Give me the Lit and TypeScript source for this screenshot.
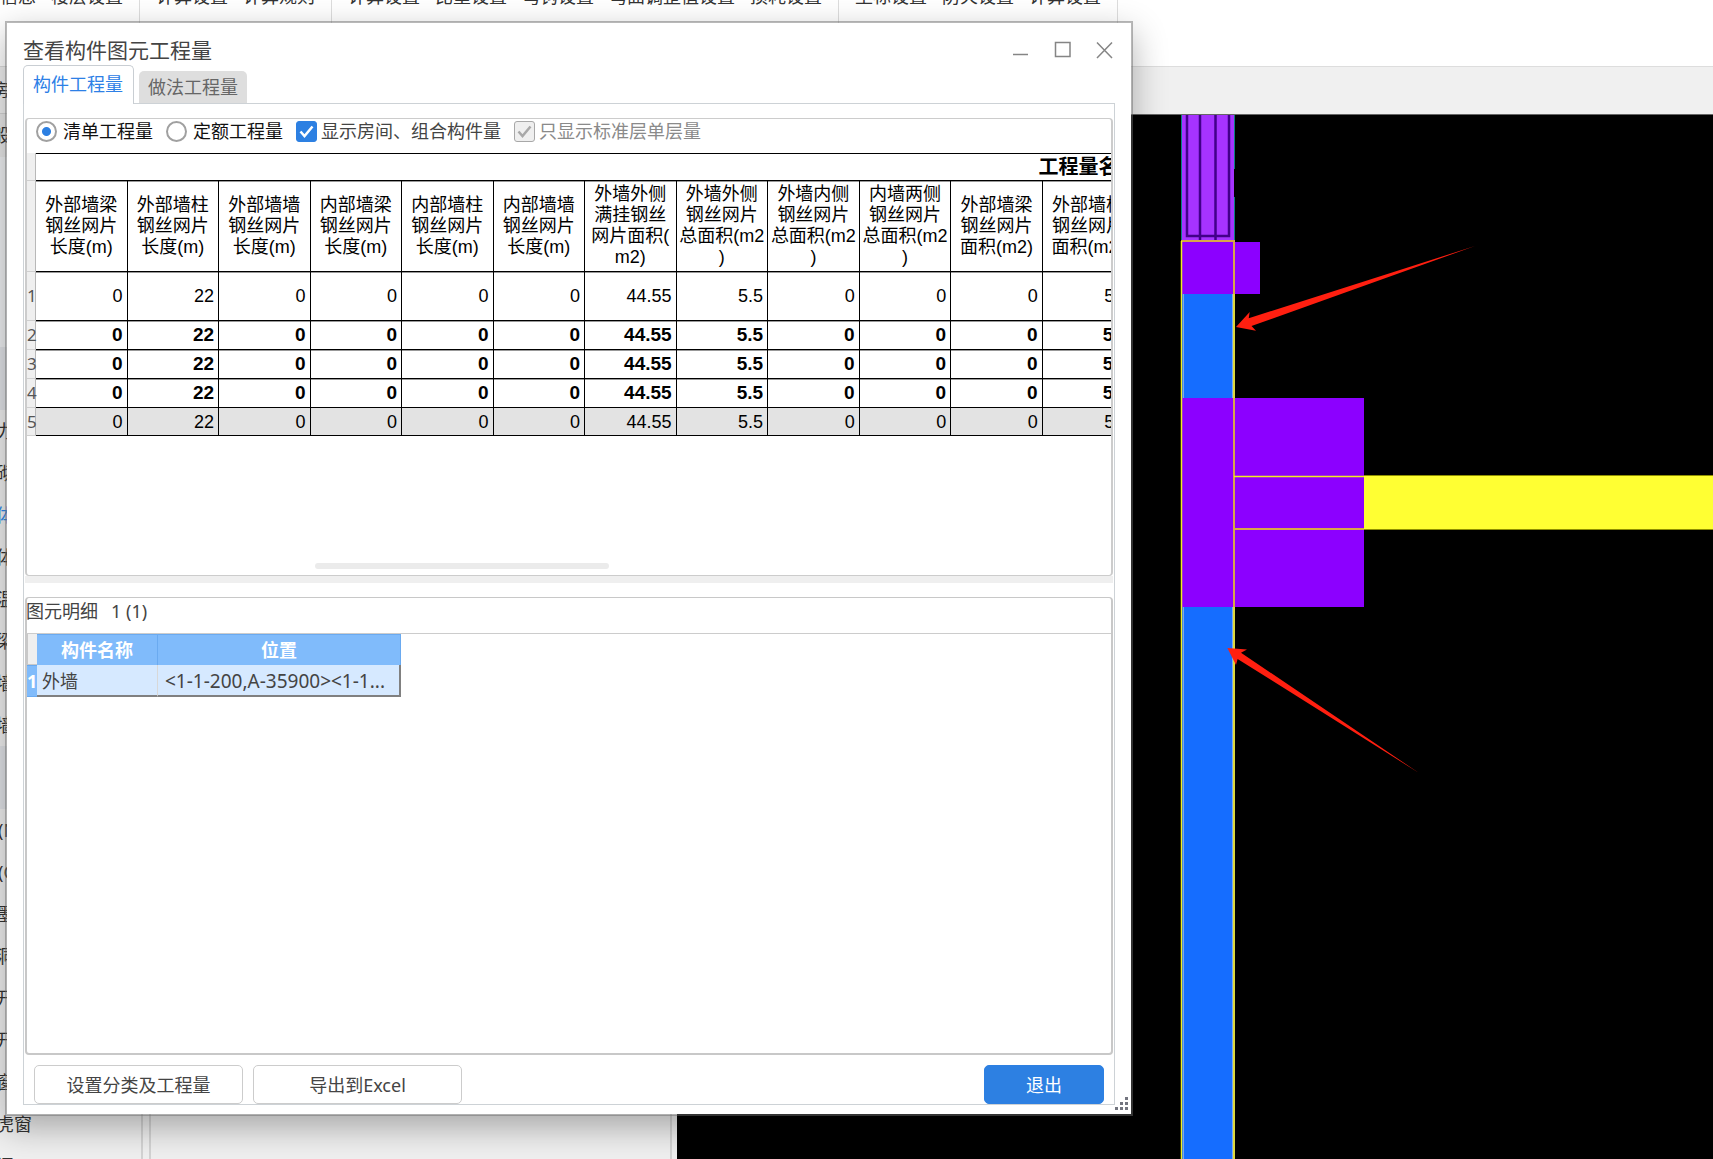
import { LitElement, html, css, svg } from "lit";
import { customElement, property, state } from "lit/decorators.js";
import { classMap } from "lit/directives/class-map.js";

const RIBBON: string[][] = [
  ["信息", "楼层设置"],
  ["计算设置", "计算规则"],
  ["计算设置", "比重设置", "弯钩设置", "弯曲调整值设置", "损耗设置"],
  ["坐标设置", "防火设置", "计算设置"],
];

const NAV_UPPER = ["力", "砌", "体", "体", "温", "梁", "墙", "墙"];
const NAV_LOWER = ["(N", "(Q", "墨", "洞", "开", "开", "窗", "虎窗", "门"];

const COLUMNS: string[][] = [
  ["外部墙梁", "钢丝网片", "长度(m)"],
  ["外部墙柱", "钢丝网片", "长度(m)"],
  ["外部墙墙", "钢丝网片", "长度(m)"],
  ["内部墙梁", "钢丝网片", "长度(m)"],
  ["内部墙柱", "钢丝网片", "长度(m)"],
  ["内部墙墙", "钢丝网片", "长度(m)"],
  ["外墙外侧", "满挂钢丝", "网片面积(", "m2)"],
  ["外墙外侧", "钢丝网片", "总面积(m2", ")"],
  ["外墙内侧", "钢丝网片", "总面积(m2", ")"],
  ["内墙两侧", "钢丝网片", "总面积(m2", ")"],
  ["外部墙梁", "钢丝网片", "面积(m2)"],
  ["外部墙柱", "钢丝网片", "面积(m2)"],
];
const TOTAL_COLUMNS = 23;
const VALUES = ["0", "22", "0", "0", "0", "0", "44.55", "5.5", "0", "0", "0", "5.5"];
const ROWS = ["plain first", "bold", "bold", "bold", "plain total"];

/* Plan view of the model, drawn in page coordinates. */
@customElement("model-canvas")
export class ModelCanvas extends LitElement {
  static styles = css`
    :host { display: block; background: #000; overflow: hidden; }
    .plan { display: block; width: 100%; height: 100%; }
  `;
  render() {
    return html`<svg class="plan" role="img" aria-label="模型">
      ${svg`<g transform="translate(-677 -115)">
        <rect x="1182" y="115" width="52" height="126" fill="#a633ff"/>
        <path d="M1181.500 115V241M1234.500 115V169M1234.500 197V241" stroke="#0a7f82" fill="none"/>
        <path d="M1187 115V236H1229V115M1200 115V242H1215.500V115" stroke="#42008a" stroke-width="2.500" fill="none"/>
        <rect x="1182" y="242" width="78" height="52" fill="#8c00ff"/>
        <rect x="1182" y="294" width="52" height="104" fill="#156dff"/>
        <rect x="1182" y="606" width="52" height="2000" fill="#156dff"/>
        <path d="M1183.500 294V398M1232.500 294V398M1183.500 607V2600M1232.500 607V2600" stroke="#7fa8e8" fill="none"/>
        <rect x="1182" y="398" width="182" height="209" fill="#8c00ff"/>
        <rect x="1364" y="476" width="4000" height="54" fill="#ffff33"/>
        <path d="M1364 475.500H5000M1364 529.500H5000" stroke="#8f8f00" fill="none"/>
        <path d="M1181 241H1235M1234 241V294M1234 398V607M1234 529H1364" stroke="#d8a648" stroke-width="2" fill="none"/>
        <path d="M1181.500 241V2600M1234 476.500H1364" stroke="#f2ee20" stroke-width="1.500" fill="none"/>
        <path d="M1234 294V398M1234 607V2600" stroke="#dcd83c" stroke-width="2" fill="none"/>
        <path d="M1236 327L1249.700 312L1248.700 318.300L1475 246L1251.500 326L1256 330.700Z" fill="#ff1f10"/>
        <path d="M1227.400 648L1247 649.500L1241 652.700L1419 773L1237.600 659L1236 665Z" fill="#ff1f10"/>
      </g>`}
    </svg>`;
  }
}

@customElement("quantity-table")
export class QuantityTable extends LitElement {
  static styles = css`
    :host { display: block; overflow: hidden; }
    .sheet {
      width: 2114px; table-layout: fixed; border-collapse: separate; border-spacing: 0;
      font-family: "Liberation Sans", "Noto Sans CJK SC", sans-serif; color: #000;
    }
    .gutter-col { width: 9px; }
    th, td { box-sizing: border-box; padding: 0; font-weight: 400; }
    .gutter {
      background: #efefef; border-right: 1px solid #b8b8b8; border-bottom: 1px solid #cfcfcf;
      color: #555; font-family: "Noto Sans", sans-serif; font-size: 17px; line-height: 20px;
    }
    .title, .head, .num { border-bottom: 1px solid #000; box-shadow: 0 1px 0 #999; }
    .title { height: 28px; border-top: 1px solid #000; font-size: 20px; line-height: 24px; font-weight: 700; }
    .head { height: 91px; border-right: 1px solid #000; font-size: 18px; line-height: 21px; }
    .line { display: block; white-space: nowrap; }
    .num { height: 29px; border-right: 1px solid #000; padding-right: 4px; text-align: right; font-size: 18px; line-height: 20px; }
    .first .num { height: 49px; }
    .bold .num { font-size: 19px; font-weight: 700; }
    .total .num { height: 28px; background: #e3e3e3; }
  `;
  render() {
    const rest = TOTAL_COLUMNS - COLUMNS.length;
    return html`<table class="sheet">
      <colgroup><col class="gutter-col" /><col span=${TOTAL_COLUMNS} /></colgroup>
      <thead>
        <tr><td class="gutter"></td><th class="title" colspan=${TOTAL_COLUMNS}>工程量名称</th></tr>
        <tr>
          <td class="gutter"></td>
          ${COLUMNS.map((c) => html`<th class="head" scope="col">${c.map((l) => html`<span class="line">${l}</span>`)}</th>`)}
          <td class="head" colspan=${rest}></td>
        </tr>
      </thead>
      <tbody>
        ${ROWS.map((kind, i) => html`<tr class=${kind}>
          <th class="gutter" scope="row">${i + 1}</th>
          ${VALUES.map((v) => html`<td class="num">${v}</td>`)}
          <td class="num" colspan=${rest}></td>
        </tr>`)}
      </tbody>
    </table>`;
  }
}

@customElement("quantity-dialog")
export class QuantityDialog extends LitElement {
  @property() heading = "";
  @state() private tab = 0;

  static styles = css`
    :host {
      display: flex; flex-direction: column; box-sizing: border-box; background: #fff; background-clip: padding-box;
      border: 2px solid rgba(106, 106, 106, 0.48); box-shadow: 0 12px 32px rgba(0, 0, 0, 0.3);
      font: 18px/24px "Noto Sans", "Noto Sans CJK SC", sans-serif; color: #444;
    }
    button { font: inherit; color: inherit; margin: 0; padding: 0; cursor: pointer; }
    .titlebar { display: flex; justify-content: space-between; height: 42px; padding: 15px 16px 0; box-sizing: border-box; }
    .heading { margin: 0; font-size: 21px; line-height: 24px; font-weight: 400; }
    .controls { display: flex; gap: 22px; }
    .control { width: 20px; height: 24px; border: 0; background: none; }
    .glyph { display: block; width: 20px; height: 24px; fill: none; stroke: #858585; stroke-width: 1.5; }
    .tabs { display: flex; align-items: flex-end; gap: 5px; height: 38px; padding: 0 16px; }
    .tab { height: 32px; padding: 0 9px; border: 0; border-radius: 5px 5px 0 0; background: #dedede; color: #666; }
    .tab.active {
      position: relative; height: 39px; margin-bottom: -1px; padding: 0 10px 3px 9px; border: 1px solid #c9ced3; border-bottom: 0;
      background: #fff; color: #2d80e6;
    }
    .pane {
      flex: 1; min-height: 0; display: flex; flex-direction: column; margin: 0 16px 9px; padding: 14px 1px 0;
      border: 1px solid #cdd2d6;
    }
    .group { display: flex; flex-direction: column; box-sizing: border-box; border: 1px solid #ccc; border-width: 1px 2px; border-radius: 4px; }
    .summary { height: 458px; }
    .options { display: flex; align-items: center; height: 24px; padding: 0 0 10px 9px; }
    .option { display: flex; align-items: center; gap: 6px; margin-right: 13px; color: #111; white-space: nowrap; }
    .option.check { gap: 4px; color: #444; }
    .option.off { color: #8a8a8a; }
    .dot, .tick { appearance: none; box-sizing: border-box; width: 21px; height: 21px; margin: 0; border: 2px solid #a0a0a0; background: #fff; }
    .dot { border-radius: 50%; }
    .dot:checked { background: radial-gradient(circle, #2d80e2 4px, #fff 5px); }
    .mark { display: grid; width: 21px; height: 21px; }
    .mark > * { grid-area: 1 / 1; }
    .tick { border-width: 1px; border-radius: 3px; }
    .tick:checked { background: #2d80e2; border-color: #2d80e2; }
    .tick:disabled { background: #efefef; border-color: #a8a8a8; }
    .tickmark { width: 21px; height: 21px; fill: none; stroke: #fff; stroke-width: 2.5; pointer-events: none; }
    .off .tickmark { stroke: #a8a8a8; }
    .scrollbar { margin-top: auto; padding: 0 0 6px 288px; }
    .thumb { width: 294px; height: 6px; border-radius: 3px; background: #ebebeb; }
    .splitter { height: 7px; margin-bottom: 14px; background: #efefef; }
    .details { flex: 1; min-height: 0; border-bottom-width: 2px; border-color: #c8c8c8; }
    .caption { display: flex; gap: 13px; padding: 1px 0 10px; margin-left: -1px; border-bottom: 1px solid #ccc; }
    .items { width: 374px; table-layout: fixed; border-collapse: separate; border-spacing: 0; }
    .items th, .items td { box-sizing: border-box; height: 31px; padding: 0; line-height: 24px; }
    .items td.cell { height: 32px; }
    .c0 { width: 10px; }
    .c1 { width: 121px; }
    .items .corner { background: #efefef; border: 1px solid #c8c8c8; border-width: 0 0 1px 1px; }
    .items .col { background: #80bbfb; border-right: 1px solid #6aaaf0; border-top: 1px solid #6aaaf0; color: #fff; font-weight: 700; }
    .items .row { background: #80bbfb; color: #fff; font-weight: 700; border: 1px solid #6aaaf0; border-width: 1px 0; }
    .items .cell { background: #d6e9ff; border-bottom: 2px solid #808080; padding: 1px 0 0 5px; }
    .items .name { border-right: 1px solid #d8d8d8; }
    .items .place { padding-left: 7px; border-right: 2px solid #808080; white-space: nowrap; overflow: hidden; font-size: 19px; }
    .footer { display: flex; gap: 10px; padding: 10px 9px 0 9px; }
    .action { width: 209px; height: 39px; border: 1px solid #ccc; border-radius: 5px; background: #fff; }
    .primary { width: 120px; margin-left: auto; border-color: #2d80e2; background: #2d80e2; color: #fff; }
    .grip { position: absolute; right: 2px; bottom: 3px; width: 14px; height: 14px; fill: #73757f; }
  `;

  private tick() {
    return html`<svg class="tickmark" viewBox="0 0 21 21" aria-hidden="true"><path d="M4.500 10.500L8.500 15L16.500 5.500" /></svg>`;
  }

  render() {
    return html`
      <header class="titlebar">
        <h1 class="heading">${this.heading}</h1>
        <div class="controls">
          <button class="control" aria-label="最小化"><svg class="glyph" viewBox="0 0 20 24"><path d="M2 16.500H17" /></svg></button>
          <button class="control" aria-label="最大化"><svg class="glyph" viewBox="0 0 20 24"><path d="M2.500 4.500H17V18.500H2.500Z" /></svg></button>
          <button class="control" aria-label="关闭"><svg class="glyph" viewBox="0 0 20 24"><path d="M2 4.500L17 20M17 4.500L2 20" /></svg></button>
        </div>
      </header>
      <div class="tabs" role="tablist">
        ${["构件工程量", "做法工程量"].map((t, i) => html`<button role="tab" aria-selected=${this.tab === i}
          class=${classMap({ tab: true, active: this.tab === i })} @click=${() => (this.tab = i)}>${t}</button>`)}
      </div>
      <div class="pane">
        <section class="group summary">
          <div class="options">
            <label class="option"><input class="dot" type="radio" name="kind" checked />清单工程量</label>
            <label class="option"><input class="dot" type="radio" name="kind" />定额工程量</label>
            <label class="option check"><span class="mark"><input class="tick" type="checkbox" checked />${this.tick()}</span>显示房间、组合构件量</label>
            <label class="option check off"><span class="mark"><input class="tick" type="checkbox" checked disabled />${this.tick()}</span>只显示标准层单层量</label>
          </div>
          <quantity-table></quantity-table>
          <div class="scrollbar"><div class="thumb"></div></div>
        </section>
        <div class="splitter"></div>
        <section class="group details">
          <div class="caption"><span>图元明细</span><span>1 (1)</span></div>
          <table class="items">
            <colgroup><col class="c0" /><col class="c1" /><col /></colgroup>
            <thead><tr><td class="corner"></td><th class="col" scope="col">构件名称</th><th class="col" scope="col">位置</th></tr></thead>
            <tbody><tr><th class="row" scope="row">1</th><td class="cell name">外墙</td><td class="cell place">&lt;1-1-200,A-35900&gt;&lt;1-1...</td></tr></tbody>
          </table>
        </section>
        <footer class="footer">
          <button class="action">设置分类及工程量</button>
          <button class="action">导出到Excel</button>
          <button class="action primary">退出</button>
        </footer>
      </div>
      <svg class="grip" viewBox="0 0 14 14" aria-hidden="true">
        <path d="M10 0h3v3h-3zM5 5h3v3h-3zM10 5h3v3h-3zM0 10h3v3h-3zM5 10h3v3h-3zM10 10h3v3h-3z" />
      </svg>
    `;
  }
}

@customElement("app-root")
export class AppRoot extends LitElement {
  static styles = css`
    :host {
      position: relative; display: flex; flex-direction: column; height: 100vh; overflow: hidden; background: #f0f0f0;
      font: 18px/24px "Noto Sans", "Noto Sans CJK SC", sans-serif; color: #333;
    }
    .ribbon { display: flex; height: 66px; background: #fff; border-bottom: 1px solid #ddd; overflow: hidden; }
    .section { display: flex; gap: 15px; padding: 0 16px; border-right: 1px solid #ddd; white-space: nowrap; }
    .section:first-child { padding-left: 0; }
    .label { margin-top: -16px; }
    .body { flex: 1; min-height: 0; display: flex; }
    .nav { width: 141px; border-right: 2px solid #d4d4d4; overflow: hidden; white-space: nowrap; }
    .entry { height: 42px; line-height: 42px; margin-left: -4px; }
    .entry.latin { margin-left: -2px; }
    .entry.current { color: #2d8cf0; }
    .top { height: 47px; line-height: 47px; border-bottom: 1px solid #d4d4d4; box-sizing: border-box; margin-left: -8px; }
    .tool { height: 43px; line-height: 43px; background: #e8e8e8; text-indent: -8px; }
    .tree { height: 190px; background: #eff1f3; }
    .band { height: 63px; background: #e2e4e8; }
    .list { width: 519px; margin-left: 6px; border: 2px solid #d4d4d4; border-width: 0 2px; }
    .work { flex: 1; display: flex; flex-direction: column; margin-left: 5px; }
    .strip { height: 47px; border-bottom: 1px solid #666; }
    model-canvas { flex: 1; }
    quantity-dialog { position: absolute; top: 21px; right: 580px; bottom: 43px; left: 5px; }
  `;
  render() {
    return html`
      <div class="ribbon">
        ${RIBBON.map((s) => html`<div class="section">${s.map((l) => html`<span class="label">${l}</span>`)}</div>`)}
      </div>
      <div class="body">
        <nav class="nav">
          <div class="top">房</div>
          <div class="tool">般</div>
          <div class="tree"></div>
          <div class="band"></div>
          ${NAV_UPPER.map((t, i) => html`<div class=${classMap({ entry: true, current: i === 2 })}>${t}</div>`)}
          <div class="band"></div>
          ${NAV_LOWER.map((t) => html`<div class=${classMap({ entry: true, latin: t.startsWith("(") })}>${t}</div>`)}
        </nav>
        <div class="list"></div>
        <div class="work">
          <div class="strip"></div>
          <model-canvas></model-canvas>
        </div>
      </div>
      <quantity-dialog heading="查看构件图元工程量"></quantity-dialog>
    `;
  }
}
